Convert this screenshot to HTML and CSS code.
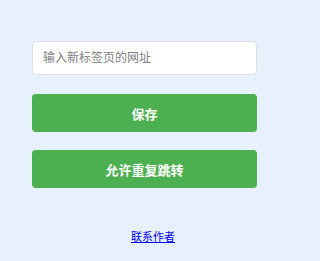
FILE: index.html
```html
<!DOCTYPE html>
<html lang="zh-CN">
<head>
<meta charset="utf-8">
<title>设置</title>
<link rel="stylesheet" href="styles.css">
</head>
<body>
<div class="page">
  <div class="panel">
    <input class="url-input" type="text" placeholder="输入新标签页的网址">
    <button class="btn">保存</button>
    <button class="btn">允许重复跳转</button>
  </div>
  <div class="footer"><a class="contact" href="#">联系作者</a></div>
</div>
</body>
</html>
```
FILE: styles.css
```css
html, body {
  margin: 0;
  padding: 0;
  background: #e6f1fd;
  font-family: "Liberation Sans", "Noto Sans CJK SC", sans-serif;
}
.page {
  width: 306px;
}
.panel {
  display: flex;
  flex-direction: column;
  gap: 18px;
  width: 225px;
  padding: 41px 0 0 32px;
}
.url-input {
  box-sizing: border-box;
  height: 34px;
  margin-bottom: 1px;
  padding: 0 10px;
  border: 1px solid #dcdfe6;
  border-radius: 4px;
  background: #fff;
  font-family: inherit;
  font-size: 12px;
  color: #333;
  outline: none;
}
.url-input::placeholder {
  color: #808080;
}
.btn {
  box-sizing: border-box;
  height: 38px;
  border: none;
  border-radius: 4px;
  background: #4caf50;
  color: #fff;
  font-family: inherit;
  font-size: 13px;
  font-weight: bold;
  cursor: pointer;
}
.footer {
  text-align: center;
  padding-top: 41px;
  line-height: 16px;
  font-size: 11px;
}
.contact {
  color: #0000ee;
}
```
